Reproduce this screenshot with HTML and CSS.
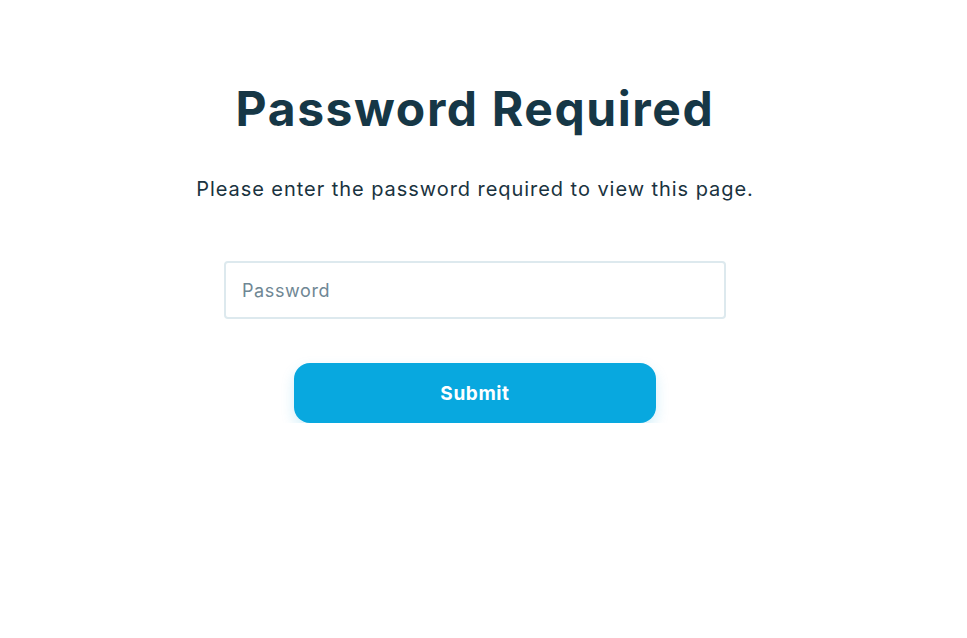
FILE: index.html
```html
<!DOCTYPE html>
<html lang="en">
<head>
<meta charset="utf-8">
<title>Password Required</title>
<link rel="stylesheet" href="styles.css">
</head>
<body>
<main class="page">
  <h1 class="title">Password Required</h1>
  <p class="lead">Please enter the password required to view this page.</p>
  <form class="form" onsubmit="return false">
    <input class="field" type="password" placeholder="Password">
    <button class="submit" type="submit">Submit</button>
  </form>
</main>
</body>
</html>
```
FILE: styles.css
```css
html, body {
  margin: 0;
  padding: 0;
  background: #ffffff;
}
body {
  font-family: Inter, "Open Sans", sans-serif;
  color: #1a3340;
}
.page {
  width: 950px;
  display: flex;
  flex-direction: column;
  align-items: center;
  padding-top: 78px;
}
.title {
  margin: 0;
  font-size: 48px;
  line-height: 62px;
  font-weight: 700;
  color: #163746;
  letter-spacing: 1.6px;
}
.lead {
  margin: 35px 0 0;
  font-size: 20px;
  line-height: 28px;
  color: #1a3340;
  letter-spacing: 0.95px;
}
.form {
  display: flex;
  flex-direction: column;
  align-items: center;
  margin-top: 58px;
}
.field {
  box-sizing: border-box;
  width: 502px;
  height: 58px;
  border: 2px solid #dde9ee;
  border-radius: 4px;
  padding: 0 16px;
  font-family: inherit;
  font-size: 18px;
  letter-spacing: 0.6px;
  color: #1a3340;
  outline: none;
}
.field::placeholder {
  color: #6f8794;
}
.submit {
  margin-top: 44px;
  width: 362px;
  height: 60px;
  border: none;
  border-radius: 16px;
  background: #08a8df;
  color: #ffffff;
  font-family: inherit;
  font-size: 19px;
  font-weight: 700;
  letter-spacing: 0.6px;
  box-shadow: 0 6px 14px rgba(8, 168, 223, 0.18);
  cursor: pointer;
}
```
